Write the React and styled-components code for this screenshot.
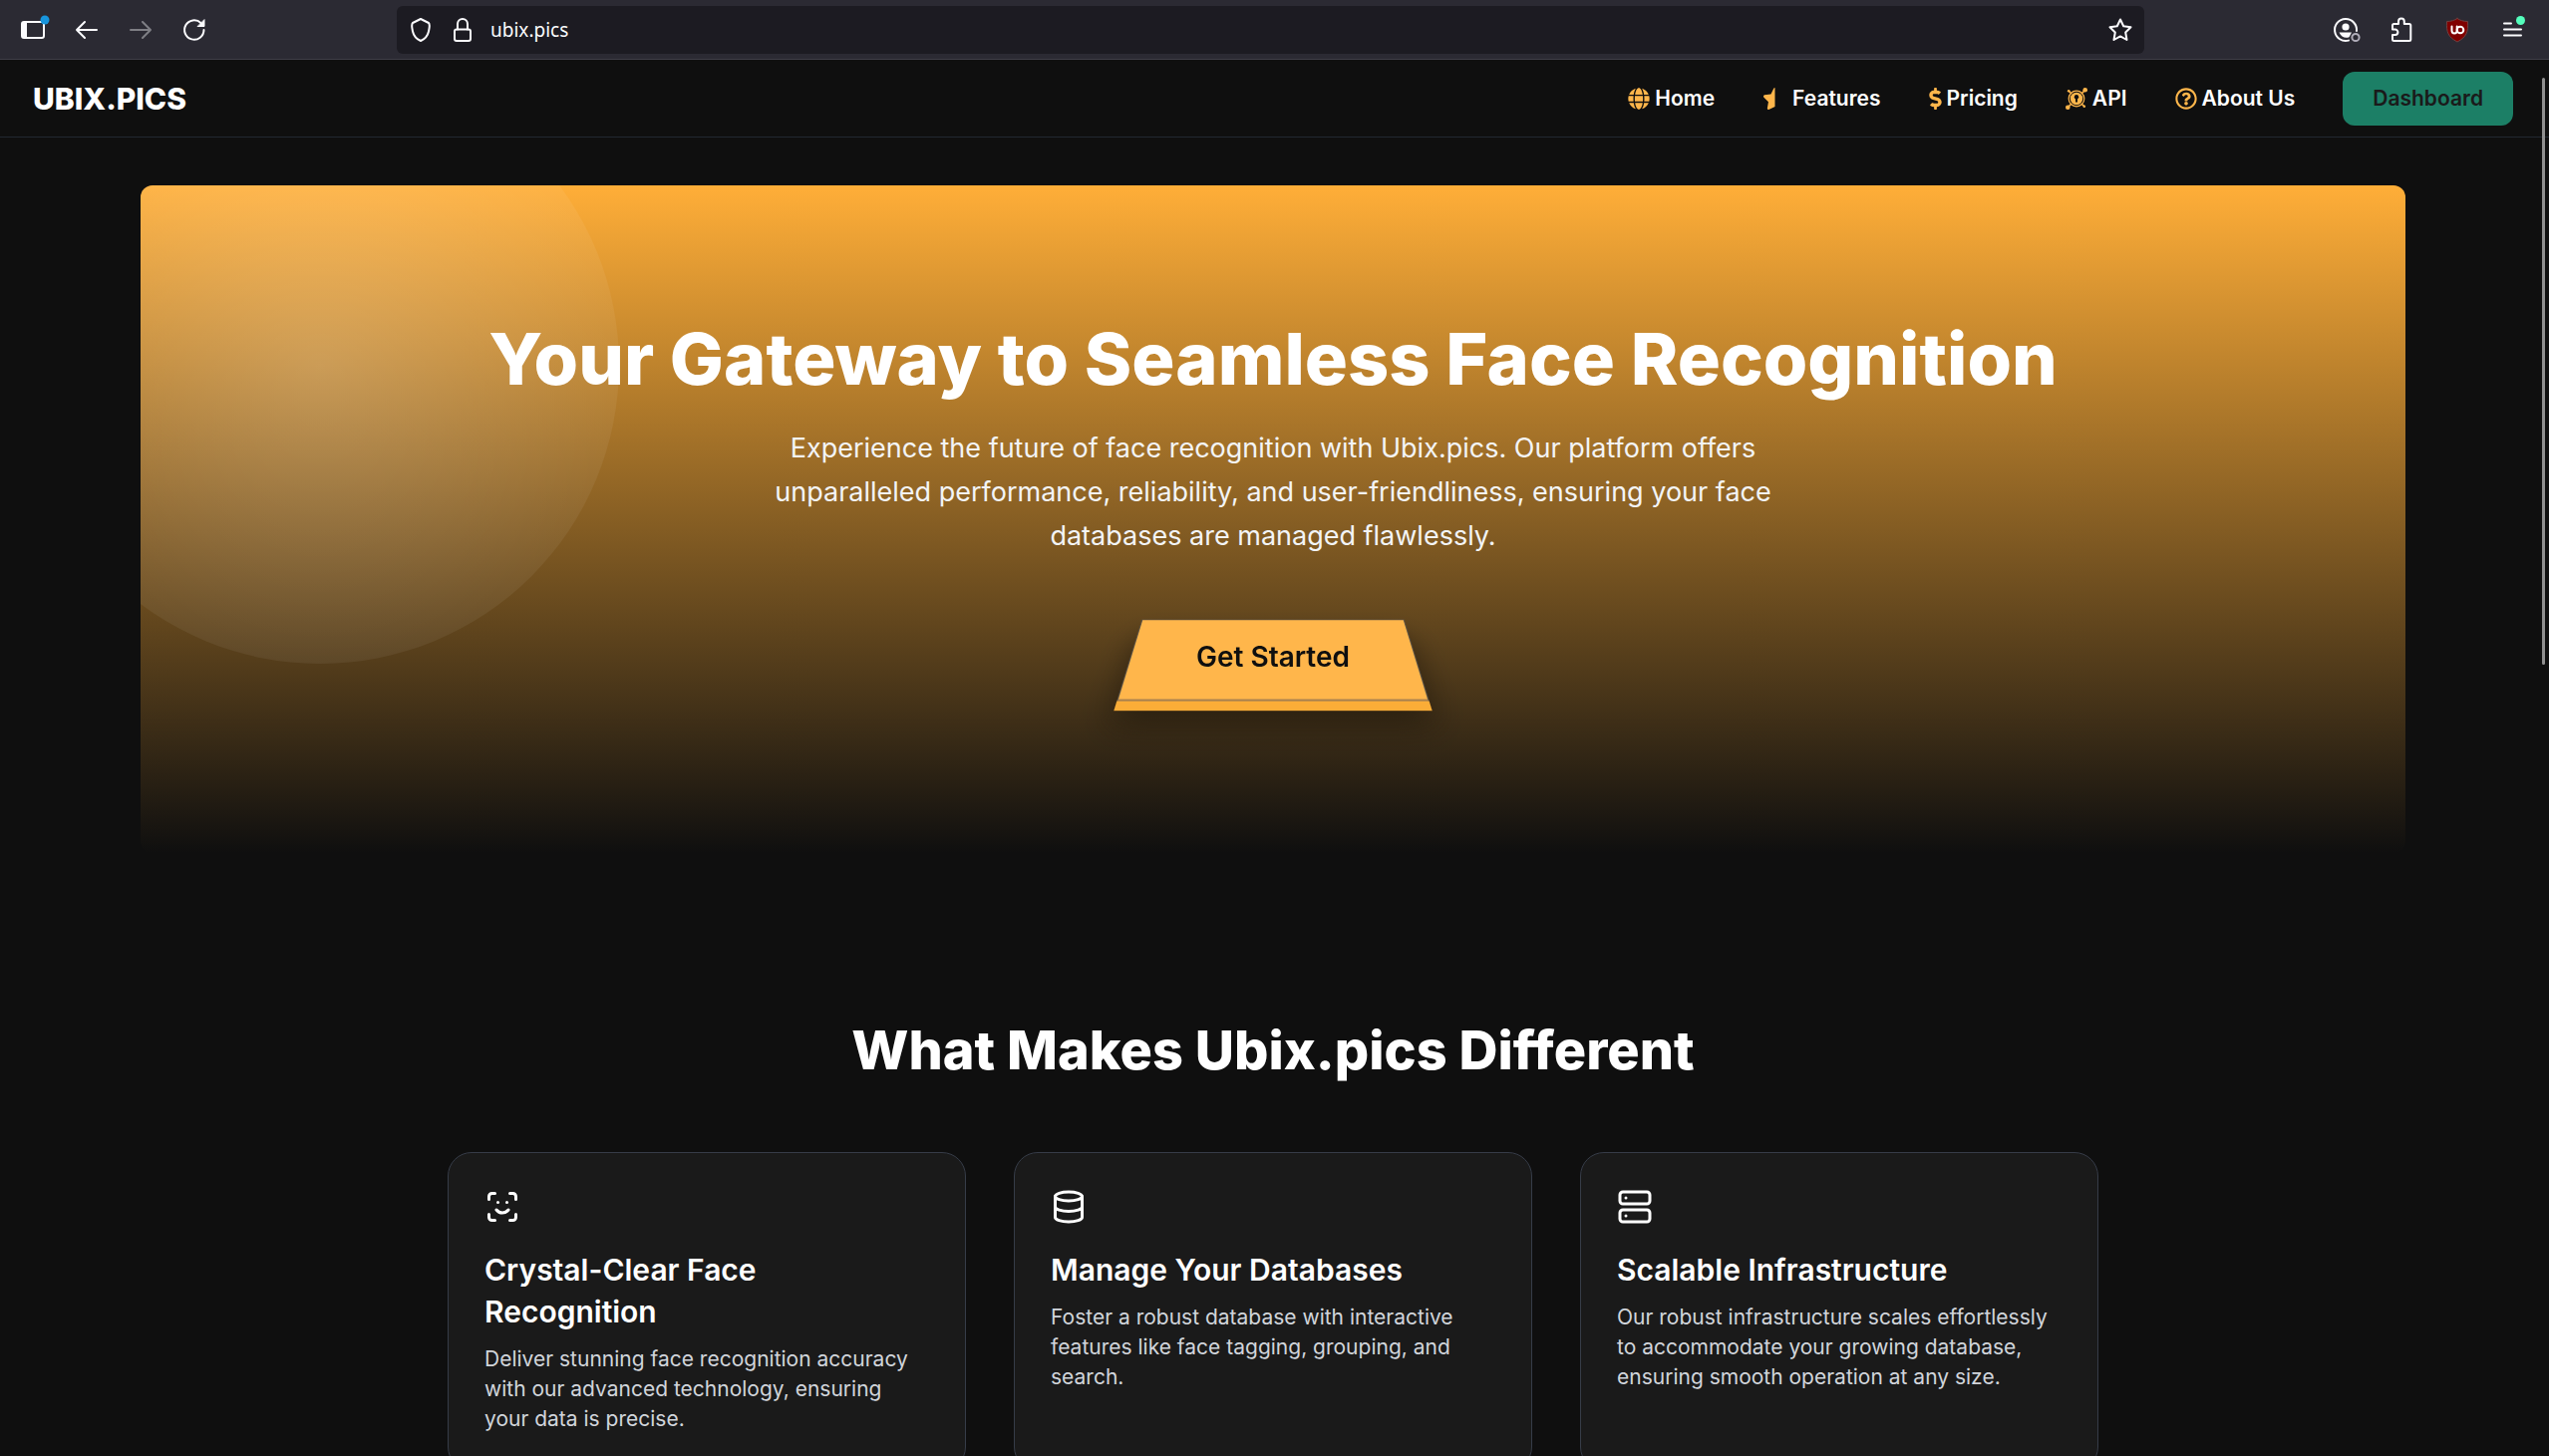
import React from "react";
import styled, { createGlobalStyle } from "styled-components";
import { Database, ScanFace, Server } from "lucide-react";
import {
  FaDollarSign,
  FaGlobe,
  FaRegQuestionCircle,
  FaStarHalf
} from "react-icons/fa";

const GlobalStyle = createGlobalStyle`
  * {
    box-sizing: border-box;
  }

  body {
    margin: 0;
    height: 100vh;
    overflow: hidden;
    background: #0f0f0f;
    color: #fff;
    font-family: "Inter", sans-serif;
  }

  h1, h2, h3, p {
    margin: 0;
  }
`;

/* Browser toolbar */

const Toolbar = styled.header`
  display: flex;
  align-items: center;
  height: 60px;
  padding: 0 22px 0 20px;
  background: #2b2a33;
  border-bottom: 1px solid #3f3e48;
`;

const ToolGroup = styled.div`
  display: flex;
  gap: ${props => props.$gap}px;
`;

const ToolButton = styled.button`
  display: flex;
  padding: 0;
  border: 0;
  background: none;
  color: #fbfbfe;
  opacity: ${props => (props.disabled ? 0.4 : 1)};

  svg {
    overflow: visible;
  }
`;

const AddressBar = styled.div`
  display: flex;
  flex: 1;
  align-items: center;
  gap: 14px;
  height: 48px;
  margin: 0 188px;
  padding: 0 10px;
  border-radius: 6px;
  background: #1c1b22;
`;

const Address = styled.input`
  flex: 1;
  min-width: 0;
  padding: 0;
  border: 0;
  outline: 0;
  background: none;
  color: #fbfbfe;
  font: 19px "Noto Sans", sans-serif;
`;

/* Site navigation */

const NavBar = styled.nav`
  display: flex;
  align-items: center;
  justify-content: space-between;
  height: 78px;
  padding: 0 36px 0 33px;
  border-bottom: 1px solid #222831;
`;

const Brand = styled.a`
  color: #fff;
  font-size: 30px;
  font-weight: 800;
  text-decoration: none;
`;

const NavLinks = styled.div`
  display: flex;
  align-items: center;
  gap: 48px;
`;

const NavLink = styled.a`
  display: flex;
  align-items: center;
  gap: 5px;
  color: #fff;
  font-size: 21px;
  font-weight: 600;
  text-decoration: none;

  svg {
    width: ${props => props.$iconWidth}px;
    height: 22px;
    color: #ffb64b;
  }
`;

const DashboardButton = styled.button`
  height: 54px;
  padding: 0 30px;
  border: 0;
  border-radius: 12px;
  background: #1c7f66;
  color: #1a1a1a;
  font: 600 21px "Inter", sans-serif;
`;

const ScrollThumb = styled.div`
  position: absolute;
  top: 78px;
  right: 4px;
  width: 3px;
  height: 589px;
  border-radius: 2px;
  background: #8f8f8f;
`;

/* Hero */

const Main = styled.main`
  padding: 48px 3px 0 0;
`;

const Hero = styled.section`
  position: relative;
  display: flex;
  flex-direction: column;
  align-items: center;
  max-width: 2272px;
  margin: 0 auto;
  padding: 130px 36px 150px;
  overflow: hidden;
  border-radius: 12px;
  background: linear-gradient(#ffae38, #0f0f0f);
  text-align: center;

  &::before {
    content: "";
    position: absolute;
    top: -120px;
    left: -120px;
    width: 600px;
    height: 600px;
    border-radius: 50%;
    background: radial-gradient(
      circle,
      rgba(255, 255, 255, 0.2),
      rgba(255, 255, 255, 0)
    );
  }
`;

const HeroTitle = styled.h1`
  position: relative;
  font-size: 72px;
  font-weight: 800;
  line-height: 88px;
`;

const HeroText = styled.p`
  position: relative;
  max-width: 1008px;
  margin: 24px 0 52px;
  color: #f3f4f6;
  font-size: 27px;
  line-height: 44px;
`;

const StartButton = styled.button`
  position: relative;
  width: 286px;
  height: 94px;
  padding: 0;
  border: 0;
  background: none;
  color: #0f0f0f;
  font: 600 28px "Inter", sans-serif;

  &::before {
    content: "";
    position: absolute;
    inset: 0;
    border: 1px solid #5d5548;
    border-bottom: 2px solid #a8814f;
    background: #ffb64b;
    box-shadow: 0 9px 0 #fbad37, 0 20px 30px rgba(0, 0, 0, 0.4);
    transform: perspective(268px) rotateX(30deg);
  }

  span {
    position: relative;
  }
`;

/* Features */

const Features = styled.section`
  max-width: 1656px;
  margin: 0 auto;
  padding-top: 158px;
`;

const SectionTitle = styled.h2`
  margin-bottom: 62px;
  font-size: 54px;
  font-weight: 800;
  line-height: 80px;
  text-align: center;
`;

const FeatureGrid = styled.div`
  display: grid;
  grid-template-columns: repeat(3, 1fr);
  gap: 48px;
`;

const FeatureCard = styled.article`
  padding: 36px;
  border: 1px solid #363c48;
  border-radius: 24px;
  background: #1a1a1a;

  svg {
    display: block;
  }
`;

const FeatureTitle = styled.h3`
  margin: 24px 0 12px;
  font-size: 30px;
  font-weight: 600;
  line-height: 42px;
`;

const FeatureText = styled.p`
  color: #d1d5db;
  font-size: 21px;
  line-height: 30px;
`;

function ToolIcon({ children, size = 28 }) {
  return (
    <svg
      width={size}
      height={size}
      viewBox="0 0 28 28"
      fill="none"
      stroke="currentColor"
      strokeWidth="2"
      strokeLinecap="round"
      strokeLinejoin="round"
      aria-hidden="true"
    >
      {children}
    </svg>
  );
}

function SidebarIcon() {
  return (
    <ToolIcon>
      <rect x="2" y="6" width="22" height="16" rx="2" />
      <path d="M2 7h5v14H2z" fill="currentColor" stroke="none" />
      <circle cx="25" cy="4" r="4.5" fill="#1795dd" stroke="none" />
    </ToolIcon>
  );
}

function BackIcon() {
  return (
    <ToolIcon>
      <path d="M23 14H3M11 6l-8 8 8 8" />
    </ToolIcon>
  );
}

function ForwardIcon() {
  return (
    <ToolIcon>
      <path d="M3 14h20M15 6l8 8-8 8" />
    </ToolIcon>
  );
}

function ReloadIcon() {
  return (
    <ToolIcon>
      <path d="M22.5 14A9.7 9.7 0 1 1 19.5 7" />
      <path d="M23 4v6.5h-6.5z" fill="currentColor" strokeWidth="1" />
    </ToolIcon>
  );
}

function ShieldIcon() {
  return (
    <ToolIcon>
      <path d="M14 3l8 4c1 1 .8 5 0 8.5C21 20 17.5 23.5 14 25c-3.5-1.5-7-5-8-9.5C5.2 12 5 8 6 7z" />
    </ToolIcon>
  );
}

function LockIcon() {
  return (
    <ToolIcon>
      <rect x="6" y="13.5" width="16" height="11.5" rx="2" />
      <path d="M9 13.5V8a5 5 0 0 1 10 0v5.5" />
    </ToolIcon>
  );
}

function BookmarkIcon() {
  return (
    <ToolIcon>
      <path d="M14 3.5l3.2 6.8 7.3 1-5.3 5.2 1.3 7.5-6.5-3.6L7.5 24l1.3-7.5-5.3-5.2 7.3-1z" />
    </ToolIcon>
  );
}

function AccountIcon() {
  return (
    <ToolIcon>
      <path d="M17 24.6A11 11 0 1 1 25 15" />
      <circle cx="14" cy="11" r="3.6" fill="currentColor" stroke="none" />
      <path d="M7.5 16.5H20l-2.5 4.8c-4 1.4-8 0-10-4.8z" fill="currentColor" stroke="none" />
      <circle cx="24" cy="21.5" r="3.6" stroke="#afacb8" />
    </ToolIcon>
  );
}

function PuzzleIcon() {
  return (
    <ToolIcon>
      <path d="M5 9.5Q5 8 6.5 8H11V5.5a2.9 2.9 0 0 1 5.8 0V8h5q1.5 0 1.5 1.5v14q0 1.5-1.5 1.5H6.5Q5 25 5 23.5V19h2.7a2.7 2.7 0 0 0 0-5.4H5z" />
    </ToolIcon>
  );
}

function BlockerIcon() {
  return (
    <ToolIcon>
      <path d="M14 2.5c3 2 6 3 10.5 3 .5 10.500-1 15.500-10.500 20.500C4.500 21 3 16 3.500 5.500 8 5.500 11 4.500 14 2.500z" fill="#800000" stroke="#704040" strokeWidth="1" />
      <path d="M8.5 10.5v4.3a2.6 2.6 0 0 0 5.2 0v-4.3" stroke="#fff" />
      <circle cx="17" cy="14" r="3.3" stroke="#fff" />
    </ToolIcon>
  );
}

function MenuIcon() {
  return (
    <ToolIcon>
      <path d="M5 7.5h7M5 13.5h17M5 19.5h17" />
      <circle cx="21.5" cy="4.5" r="4.5" fill="#54ffbd" stroke="none" />
    </ToolIcon>
  );
}

function ApiIcon() {
  return (
    <svg width="22" height="22" viewBox="0 0 22 22" fill="none" stroke="currentColor" aria-hidden="true">
      <path d="M2 20l4-4M16 6l3.500-3.500M3 3l3 3M16 16l3 3" strokeWidth="1.6" />
      <circle cx="2.3" cy="19.7" r="2.3" fill="currentColor" stroke="none" />
      <circle cx="19.7" cy="2.3" r="2.3" fill="currentColor" stroke="none" />
      <circle cx="3.2" cy="3.2" r="1.3" fill="currentColor" stroke="none" />
      <circle cx="18.8" cy="18.8" r="1.3" fill="currentColor" stroke="none" />
      <circle cx="11" cy="11" r="7.8" strokeWidth="1.2" />
      <circle cx="11" cy="11" r="6.2" fill="currentColor" stroke="none" />
      <circle cx="11" cy="9.3" r="2.2" fill="#0f0f0f" stroke="none" />
      <path d="M10 10h2v4.5h-2z" fill="#0f0f0f" stroke="none" />
    </svg>
  );
}

// The icons share a height, their widths follow their own view boxes
const links = [
  { label: "Home", icon: FaGlobe, iconWidth: 22 },
  { label: "Features", icon: FaStarHalf, iconWidth: 25 },
  { label: "Pricing", icon: FaDollarSign, iconWidth: 13 },
  { label: "API", icon: ApiIcon, iconWidth: 22 },
  { label: "About Us", icon: FaRegQuestionCircle, iconWidth: 22 }
];

const features = [
  {
    icon: ScanFace,
    title: "Crystal-Clear Face Recognition",
    text:
      "Deliver stunning face recognition accuracy with our advanced technology, ensuring your data is precise."
  },
  {
    icon: Database,
    title: "Manage Your Databases",
    text:
      "Foster a robust database with interactive features like face tagging, grouping, and search."
  },
  {
    icon: Server,
    title: "Scalable Infrastructure",
    text:
      "Our robust infrastructure scales effortlessly to accommodate your growing database, ensuring smooth operation at any size."
  }
];

function BrowserToolbar() {
  return (
    <Toolbar>
      <ToolGroup $gap={26}>
        <ToolButton aria-label="Sidebar"><SidebarIcon /></ToolButton>
        <ToolButton aria-label="Back"><BackIcon /></ToolButton>
        <ToolButton aria-label="Forward" disabled><ForwardIcon /></ToolButton>
        <ToolButton aria-label="Reload"><ReloadIcon /></ToolButton>
      </ToolGroup>
      <AddressBar>
        <ToolButton aria-label="Tracking protection"><ShieldIcon /></ToolButton>
        <ToolButton aria-label="Site information"><LockIcon /></ToolButton>
        <Address aria-label="Address" defaultValue="ubix.pics" />
        <ToolButton aria-label="Bookmark"><BookmarkIcon /></ToolButton>
      </AddressBar>
      <ToolGroup $gap={28}>
        <ToolButton aria-label="Account"><AccountIcon /></ToolButton>
        <ToolButton aria-label="Extensions"><PuzzleIcon /></ToolButton>
        <ToolButton aria-label="Ad blocker"><BlockerIcon /></ToolButton>
        <ToolButton aria-label="Menu"><MenuIcon /></ToolButton>
      </ToolGroup>
    </Toolbar>
  );
}

function SiteNav() {
  return (
    <NavBar>
      <Brand href="#">UBIX.PICS</Brand>
      <NavLinks>
        {links.map(({ label, icon: Icon, iconWidth }) => (
          <NavLink key={label} href="#" $iconWidth={iconWidth}>
            <Icon />
            {label}
          </NavLink>
        ))}
        <DashboardButton>Dashboard</DashboardButton>
      </NavLinks>
    </NavBar>
  );
}

export default function App() {
  return (
    <>
      <GlobalStyle />
      <BrowserToolbar />
      <SiteNav />
      <Main>
        <Hero>
          <HeroTitle>Your Gateway to Seamless Face Recognition</HeroTitle>
          <HeroText>
            Experience the future of face recognition with Ubix.pics. Our
            platform offers unparalleled performance, reliability, and
            user-friendliness, ensuring your face databases are managed
            flawlessly.
          </HeroText>
          <StartButton>
            <span>Get Started</span>
          </StartButton>
        </Hero>
        <Features>
          <SectionTitle>What Makes Ubix.pics Different</SectionTitle>
          <FeatureGrid>
            {features.map(({ icon: Icon, title, text }) => (
              <FeatureCard key={title}>
                <Icon size={36} />
                <FeatureTitle>{title}</FeatureTitle>
                <FeatureText>{text}</FeatureText>
              </FeatureCard>
            ))}
          </FeatureGrid>
        </Features>
      </Main>
      <ScrollThumb />
    </>
  );
}
